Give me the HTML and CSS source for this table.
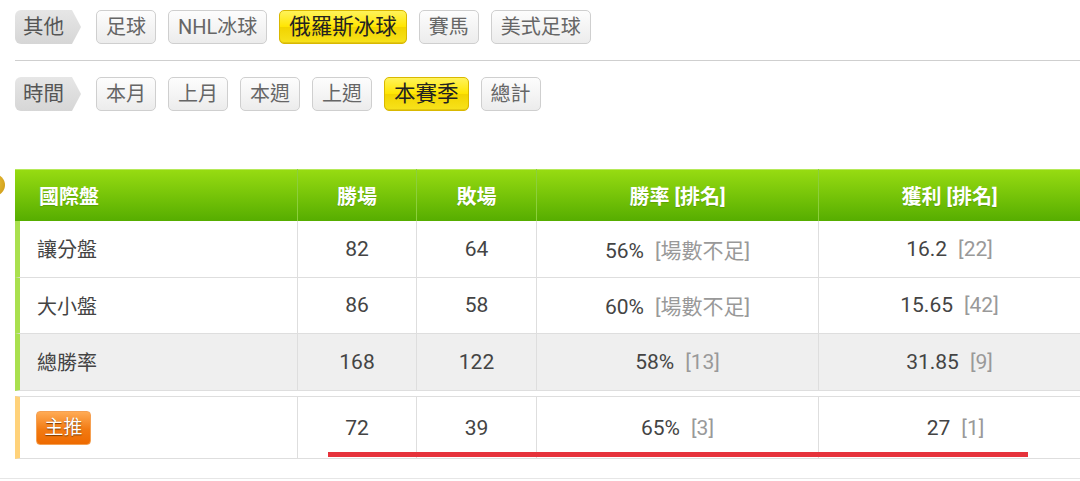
FILE: index.html
```html
<!DOCTYPE html>
<html lang="zh-Hant">
<head>
  <meta charset="UTF-8" />
  <meta name="viewport" content="width=device-width, initial-scale=1.0"/>
  <title>國際盤戰績</title>
  <link rel="stylesheet" href="styles.css">
</head>
<body>

  <div class="filters">
    <div class="filter-row">
      <span class="tag">其他</span>
      <a class="btn">足球</a>
      <a class="btn">NHL冰球</a>
      <a class="btn active">俄羅斯冰球</a>
      <a class="btn">賽馬</a>
      <a class="btn">美式足球</a>
    </div>
    <div class="sep"></div>
    <div class="filter-row">
      <span class="tag">時間</span>
      <a class="btn">本月</a>
      <a class="btn">上月</a>
      <a class="btn">本週</a>
      <a class="btn">上週</a>
      <a class="btn active">本賽季</a>
      <a class="btn">總計</a>
    </div>
  </div>

  <div class="stats">
    <span class="dot"></span>
    <table class="grid">
      <colgroup>
        <col class="c-name"><col class="c-num"><col class="c-num2"><col class="c-rate"><col class="c-profit">
      </colgroup>
      <thead>
        <tr>
          <th class="name">國際盤</th>
          <th>勝場</th>
          <th>敗場</th>
          <th>勝率 [排名]</th>
          <th>獲利 [排名]</th>
        </tr>
      </thead>
      <tbody>
        <tr>
          <td class="name">讓分盤</td>
          <td>82</td>
          <td>64</td>
          <td>56%<span class="rank">[場數不足]</span></td>
          <td>16.2<span class="rank">[22]</span></td>
        </tr>
        <tr>
          <td class="name">大小盤</td>
          <td>86</td>
          <td>58</td>
          <td>60%<span class="rank">[場數不足]</span></td>
          <td>15.65<span class="rank">[42]</span></td>
        </tr>
        <tr class="total">
          <td class="name">總勝率</td>
          <td>168</td>
          <td>122</td>
          <td>58%<span class="rank">[13]</span></td>
          <td>31.85<span class="rank">[9]</span></td>
        </tr>
      </tbody>
    </table>

    <table class="grid pick">
      <colgroup>
        <col class="c-name"><col class="c-num"><col class="c-num2"><col class="c-rate"><col class="c-profit">
      </colgroup>
      <tbody>
        <tr>
          <td class="name"><span class="badge">主推</span></td>
          <td>72</td>
          <td>39</td>
          <td>65%<span class="rank">[3]</span></td>
          <td class="shift">27<span class="rank">[1]</span></td>
        </tr>
      </tbody>
    </table>

    <div class="mark"></div>
  </div>

  <div class="foot"></div>

</body>
</html>
```

FILE: styles.css
```css
* {
  box-sizing: border-box;
}

body {
  margin: 0;
  padding: 0;
  font-family: 'Roboto', 'Noto Sans CJK TC', sans-serif;
  background: #fff;
  color: #444;
  width: 1080px;
  height: 481px;
  overflow: hidden;
}

.filters {
  padding: 10px 0 0 15px;
}

.filter-row {
  display: flex;
  align-items: center;
  gap: 12px;
  height: 34px;
}

.sep {
  height: 1px;
  background: #cfcfcf;
  margin: 16px 0;
}

.tag {
  width: 66px;
  height: 34px;
  line-height: 34px;
  padding-left: 8px;
  margin-right: 3px;
  font-size: 20.5px;
  color: #555;
  background: linear-gradient(#e6e6e6, #d6d6d6);
  border-radius: 6px 0 0 6px;
  clip-path: polygon(0 0, calc(100% - 9px) 0, 100% 50%, calc(100% - 9px) 100%, 0 100%);
}

.btn {
  height: 34px;
  line-height: 32px;
  padding: 0 9px;
  font-size: 20px;
  color: #666;
  background: linear-gradient(#fdfdfd, #ececec);
  border: 1px solid #cfcfcf;
  border-radius: 5px;
  white-space: nowrap;
}

.btn.active {
  font-size: 21.5px;
  color: #222;
  background: linear-gradient(#fff35a 0%, #ffe500 50%, #f2d400 51%, #f7e21c 100%);
  border-color: #d9b800;
  box-shadow: inset 0 -1px 0 rgba(180, 140, 0, 0.3);
}

.stats {
  position: relative;
  margin-top: 58px;
  padding-left: 15px;
}

.dot {
  position: absolute;
  left: -17px;
  top: 5px;
  width: 22px;
  height: 22px;
  border-radius: 50%;
  background: radial-gradient(circle at 30% 40%, #f4d24a, #c99410);
}

.grid {
  width: 1065px;
  table-layout: fixed;
  border-collapse: separate;
  border-spacing: 0;
  font-size: 21px;
}

.c-name { width: 282px; }
.c-num { width: 119px; }
.c-num2 { width: 120px; }
.c-rate { width: 282px; }
.c-profit { width: 262px; }

.grid th {
  height: 52px;
  padding: 0;
  font-size: 20px;
  font-weight: bold;
  color: #fff;
  text-align: center;
  background: linear-gradient(#98dc12, #56ad00);
  border-left: 1px solid #8ccf3c;
  box-shadow: inset 0 1px 0 #b6e95a;
  text-shadow: 0 1px 1px rgba(0, 0, 0, 0.15);
}

.grid th.name {
  text-align: left;
  padding-left: 24px;
  border-left: none;
}

.grid td {
  height: 56.5px;
  padding: 0;
  text-align: center;
  border-left: 1px solid #dedede;
  border-bottom: 1px solid #dedede;
  background: #fff;
}

.grid td.name {
  text-align: left;
  padding-left: 17px;
  font-size: 20px;
  border-left: 5px solid #a9e04e;
}

.grid tr.total td {
  background: #efefef;
}

.rank {
  color: #999;
  margin-left: 11px;
}

.pick {
  margin-top: 5px;
}

.pick td {
  height: 63px;
  border-top: 1px solid #dedede;
  padding-top: 2px;
}

.pick td.shift {
  padding-left: 12px;
}

.pick td.name {
  border-left-color: #ffd27a;
  padding-left: 16px;
}

.badge {
  display: inline-block;
  width: 55px;
  height: 34px;
  line-height: 32px;
  text-align: center;
  font-size: 19px;
  color: #fff;
  text-shadow: 0 1px 1px #7a3a00;
  background: linear-gradient(#ffab55, #f27a12 55%, #ee6a00);
  border: 1px solid #f5a052;
  border-radius: 4px;
}

.mark {
  position: absolute;
  left: 328px;
  top: 283px;
  width: 700px;
  height: 5px;
  background: #e6323b;
}

.foot {
  margin-top: 19px;
  border-top: 1px solid #e6e6e6;
  height: 3px;
}
```
